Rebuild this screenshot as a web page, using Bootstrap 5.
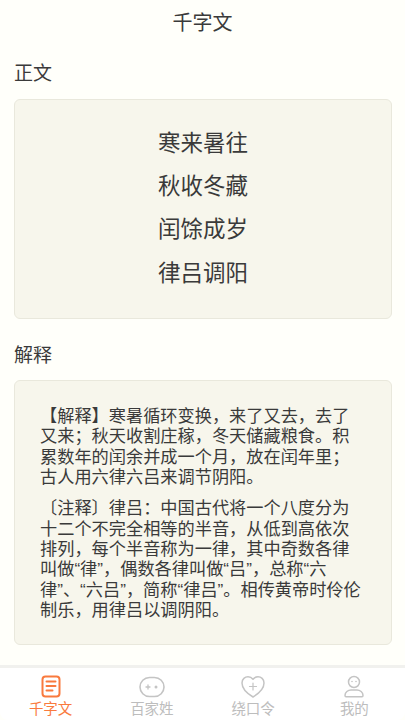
<!DOCTYPE html>
<html lang="zh">
<head>
<meta charset="utf-8">
<link href="https://cdn.jsdelivr.net/npm/bootstrap@5.3.0/dist/css/bootstrap.min.css" rel="stylesheet">
<style>
html,body{height:720px;overflow:hidden}
body{background:#fffffa;font-family:"Liberation Sans","Noto Sans CJK SC",sans-serif;color:#3a3a3a}
.app-frame{height:720px}
.top-title{height:46px;font-size:20px;line-height:46px}
.sec-head{font-size:19px;line-height:28px;padding-left:14px}
.head-one{margin-top:14px}
.head-two{margin-top:23px}
.paper{margin:11px 13px 0 14px;background:#f7f6ec;border:1px solid #e9e8dc;border-radius:6px}
.poem-box{height:220px;padding-top:22px}
.poem-line{font-size:22.5px;line-height:43.2px;text-align:center}
.note-box{height:265px;margin-top:10px;padding:25px 25px 0 25px;font-size:17.2px;line-height:20.4px}
.note-box p{margin:0 0 10.500px}
.tab-bar{height:55px;padding-top:0;background:#fff;border-top:3px solid #f1f1ee;border-radius:0 0 8px 8px}
.tab-cell{width:25%;padding-top:6px;color:#bdbdbd;font-size:14.500px;line-height:17px}
.tab-cell svg{display:block;width:26px;height:26px;margin-bottom:1px}
.tab-on{color:#f97a3e}
</style>
</head>
<body>
<div class="app-frame d-flex flex-column">
  <div class="top-title text-center">千字文</div>
  <div class="flex-grow-1">
    <div class="sec-head head-one">正文</div>
    <div class="paper poem-box">
      <div class="poem-line">寒来暑往</div>
      <div class="poem-line">秋收冬藏</div>
      <div class="poem-line">闰馀成岁</div>
      <div class="poem-line">律吕调阳</div>
    </div>
    <div class="sec-head head-two">解释</div>
    <div class="paper note-box">
      <p>【解释】寒暑循环变换，来了又去，去了又来；秋天收割庄稼，冬天储藏粮食。积累数年的闰余并成一个月，放在闰年里；古人用六律六吕来调节阴阳。</p>
      <p>〔注释〕律吕：中国古代将一个八度分为十二个不完全相等的半音，从低到高依次排列，每个半音称为一律，其中奇数各律叫做“律”，偶数各律叫做“吕”，总称“六律”、“六吕”，简称“律吕”。相传黄帝时伶伦制乐，用律吕以调阴阳。</p>
    </div>
  </div>
  <div class="tab-bar d-flex">
    <div class="tab-cell tab-on d-flex flex-column align-items-center">
      <svg viewBox="0 0 26 26" fill="none" stroke="#f97a3e" stroke-width="2" stroke-linecap="round"><rect x="4.500" y="2.500" width="17" height="20" rx="3"/><path d="M8.500 7.500h9M8.500 12h9M8.500 16.500h6"/></svg>
      千字文
    </div>
    <div class="tab-cell d-flex flex-column align-items-center">
      <svg viewBox="0 0 26 26" fill="none" stroke="#c4c4c4" stroke-width="1.600" stroke-linecap="round"><rect x="1" y="3.500" width="24" height="19" rx="9.500"/><path d="M7 13h4M9 11v4" stroke-width="1.300"/><circle cx="17" cy="13" r="1.500" fill="#c4c4c4" stroke="none"/></svg>
      百家姓
    </div>
    <div class="tab-cell d-flex flex-column align-items-center">
      <svg viewBox="0 0 26 26" fill="none" stroke="#c4c4c4" stroke-width="1.500" stroke-linecap="round" stroke-linejoin="round"><path d="M13 23C8 20 2 15.500 2 9 2 5 5 2.800 8 2.800c2 0 3.800 1 5 2.500 1.200-1.500 3-2.500 5-2.500 3 0 6 2.200 6 6.200C24 15.500 18 20 13 23Z"/><path d="M13 9v7M9.500 12.500h7" stroke-width="1.200"/></svg>
      绕口令
    </div>
    <div class="tab-cell d-flex flex-column align-items-center">
      <svg viewBox="0 0 26 26" fill="none" stroke="#c4c4c4" stroke-width="1.500" stroke-linecap="round"><circle cx="13" cy="8" r="5.500"/><path d="M5 22.800c-.8 0-1-.7-1-1.500 0-3 3-5.300 6-5.300h6c3 0 6 2.300 6 5.300 0 .8-.2 1.500-1 1.500Z"/><circle cx="11" cy="7.500" r=".8" fill="#c4c4c4" stroke="none"/><circle cx="15" cy="7.500" r=".8" fill="#c4c4c4" stroke="none"/></svg>
      我的
    </div>
  </div>
</div>
<script src="https://cdn.jsdelivr.net/npm/bootstrap@5.3.0/dist/js/bootstrap.bundle.min.js"></script>
</body>
</html>
